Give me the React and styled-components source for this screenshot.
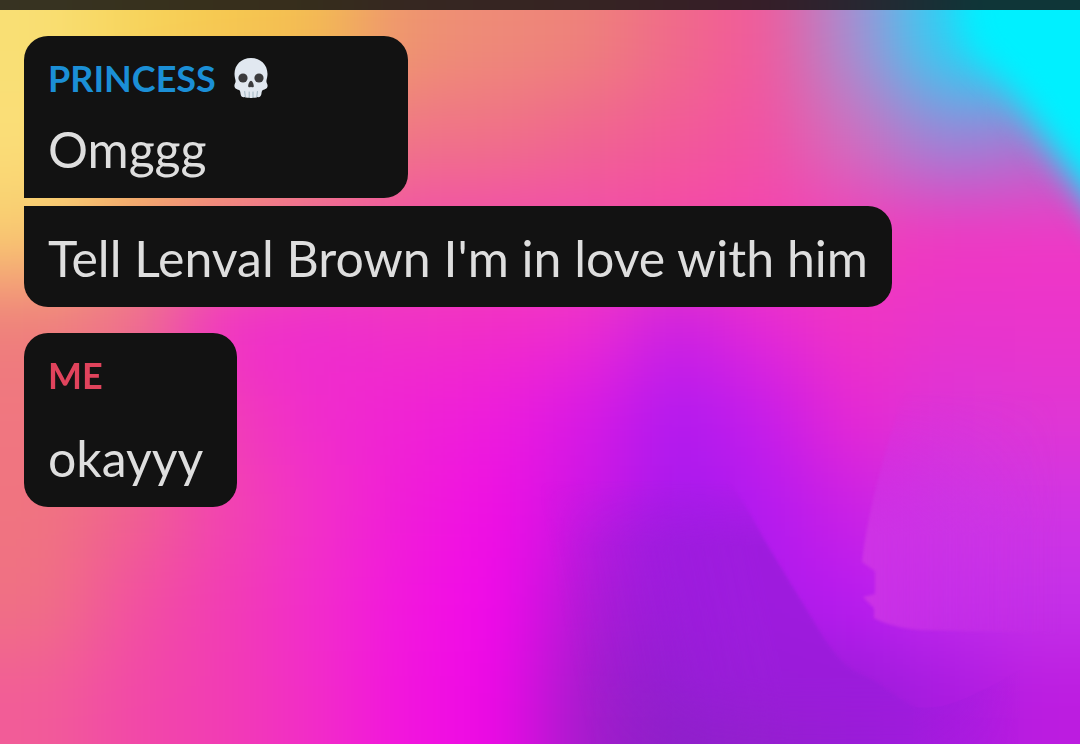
import React from "react";
import styled, { createGlobalStyle } from "styled-components";

const messageGroups = [
  {
    author: "Princess",
    skull: true,
    color: "#1b8fd6",
    messages: [
      { text: "Omggg", minWidth: 384, gap: 17 },
      { text: "Tell Lenval Brown I'm in love with him" },
    ],
  },
  {
    author: "Me",
    color: "#e0435c",
    messages: [{ text: "okayyy", minWidth: 213, gap: 29 }],
  },
];

// wallpaper colours, one entry per 90x93 patch, left to right
const patches = [
  ["#f9df74", "#f7d45c", "#f6c850", "#f3bc52", "#ee9470", "#ee8a78", "#ee827a", "#f06a8a", "#f2589c", "#a490d4", "#28d4f6", "#00f0ff"],
  ["#fade78", "#f5c860", "#f0a868", "#ee9070", "#f07488", "#f07088", "#f06490", "#f25a98", "#f250a4", "#d070c0", "#9888d8", "#a878d0"],
  ["#f9cc70", "#f09a70", "#f07888", "#f060a0", "#f250a8", "#f24cac", "#f24cac", "#f448a8", "#f444b0", "#f040b8", "#f038c0", "#f038c4"],
  ["#ee7e7c", "#ee6c90", "#f030c8", "#ee2cce", "#f030c8", "#f22cc8", "#ee2cd0", "#cc20e4", "#e628d6", "#f034c4", "#e834cc", "#ea34cc"],
  ["#f07680", "#f07088", "#f23cb8", "#f02ccc", "#f022d4", "#ee1cdc", "#d818e4", "#b01af0", "#c61cea", "#e828d2", "#dc34d8", "#e036d4"],
  ["#f07480", "#f06090", "#f244b0", "#f230c8", "#f01cd8", "#f00ee4", "#cc16e4", "#a61aec", "#b41af0", "#cc20e4", "#cc34e4", "#d034e4"],
  ["#f07084", "#f250a0", "#f23cb4", "#f22ccc", "#f216de", "#f208ea", "#b41ad6", "#9c1cdc", "#ae1aec", "#b81af0", "#c028ec", "#c430e8"],
  ["#f25c98", "#f248a8", "#f23cb4", "#f22cc8", "#f214de", "#ee08e6", "#a41ccc", "#8c20c8", "#9420cc", "#9a1cd8", "#a81ae0", "#bc1ce0"],
];

const clamp = (value, max) => Math.min(Math.max(value, 0), max);

const Wallpaper = () => {
  const cells = [];
  // two extra rings of patches keep the blur solid at the edges
  for (let row = -2; row <= patches.length + 1; row++) {
    for (let col = -2; col <= 13; col++) {
      cells.push(
        <rect
          key={`${row}-${col}`}
          x={col * 90}
          y={row * 93}
          width="91"
          height="94"
          fill={patches[clamp(row, 7)][clamp(col, 11)]}
        />
      );
    }
  }

  return (
    <WallpaperSvg viewBox="0 0 1080 744" preserveAspectRatio="none" aria-hidden="true">
      <defs>
        <filter
          id="patchBlur"
          filterUnits="userSpaceOnUse"
          x="-180"
          y="-186"
          width="1440"
          height="1116"
          colorInterpolationFilters="sRGB"
        >
          <feGaussianBlur stdDeviation="38" />
        </filter>
        <filter id="cyanBlur" x="-50%" y="-50%" width="200%" height="200%" colorInterpolationFilters="sRGB">
          <feGaussianBlur stdDeviation="16" />
        </filter>
        <filter id="edgeBlur" x="-20%" y="-20%" width="140%" height="140%" colorInterpolationFilters="sRGB">
          <feGaussianBlur stdDeviation="1.5" />
        </filter>
        <linearGradient id="duneFill" gradientUnits="userSpaceOnUse" x1="560" y1="600" x2="760" y2="560">
          <stop offset="0" stopColor="#941ed2" stopOpacity="0" />
          <stop offset="0.6" stopColor="#9a1cda" stopOpacity="0.8" />
          <stop offset="1" stopColor="#9a1cda" />
        </linearGradient>
        <linearGradient id="duneFade" gradientUnits="userSpaceOnUse" x1="0" y1="480" x2="0" y2="744">
          <stop offset="0" stopColor="#fff" stopOpacity="0" />
          <stop offset="0.25" stopColor="#fff" stopOpacity="0.8" />
          <stop offset="0.75" stopColor="#fff" stopOpacity="0.8" />
          <stop offset="1" stopColor="#fff" stopOpacity="0.3" />
        </linearGradient>
        <mask id="duneMask">
          <rect y="460" width="1080" height="284" fill="url(#duneFade)" />
        </mask>
        <linearGradient id="cliffFill" gradientUnits="userSpaceOnUse" x1="865" y1="0" x2="1060" y2="0">
          <stop offset="0" stopColor="#d038e4" />
          <stop offset="1" stopColor="#cc34e6" stopOpacity="0" />
        </linearGradient>
        <linearGradient id="cliffFade" gradientUnits="userSpaceOnUse" x1="0" y1="390" x2="0" y2="632">
          <stop offset="0" stopColor="#fff" stopOpacity="0" />
          <stop offset="0.6" stopColor="#fff" stopOpacity="0.8" />
          <stop offset="1" stopColor="#fff" stopOpacity="0.8" />
        </linearGradient>
        <mask id="cliffMask">
          <rect y="390" width="1080" height="260" fill="url(#cliffFade)" />
        </mask>
        <linearGradient id="shoreFill" gradientUnits="userSpaceOnUse" x1="900" y1="0" x2="1020" y2="0">
          <stop offset="0" stopColor="#9a1cda" />
          <stop offset="1" stopColor="#a41ade" stopOpacity="0" />
        </linearGradient>
      </defs>
      <g filter="url(#patchBlur)">{cells}</g>
      <path
        d="M976 -40C962 0 960 40 985 60C1008 76 1020 104 1044 138L1084 196L1140 280V-40Z"
        fill="#00f0ff"
        filter="url(#cyanBlur)"
      />
      <g mask="url(#duneMask)">
        <path
          d="M540 470H715C740 490 752 518 768 546L825 640C838 658 845 667 860 674C880 682 898 700 915 707V780H540Z"
          fill="url(#duneFill)"
          filter="url(#edgeBlur)"
        />
        <path d="M915 707C940 710 960 704 1020 670V780H915Z" fill="url(#shoreFill)" />
      </g>
      <g mask="url(#cliffMask)">
        <path
          d="M905 390C885 450 868 510 862 562L875 571V594L863 597L874 608V618C885 624 900 628 920 630L1080 634V390Z"
          fill="url(#cliffFill)"
          filter="url(#edgeBlur)"
        />
      </g>
    </WallpaperSvg>
  );
};

const Skull = () => (
  <SkullSvg viewBox="0 0 34 40" role="img" aria-label="skull">
    <path
      d="M17 0C7.300 0 .5 6.800 .5 16C.5 19 1.400 21 1.600 23C1.700 25 .3 26 .4 28C.5 30.500 3 31.300 5 32C6.200 32.500 6.300 34 6.600 36C7 38.600 8.600 39.600 10.600 39C12 40 14 40 15.200 39.400C16.300 40.200 18 40.200 19 39.400C20.500 40 22.200 40 23.500 39C25.500 39.500 27 38.500 27.400 36C27.700 34 27.800 32.500 29 32C31 31.300 33.500 30.500 33.600 28C33.700 26 32.300 25 32.400 23C32.600 21 33.500 19 33.500 16C33.500 6.800 26.700 0 17 0Z"
      fill="#e1e8f0"
    />
    <circle cx="9" cy="20" r="4.600" fill="#3b3b3d" />
    <circle cx="25" cy="20" r="4.600" fill="#3b3b3d" />
    <path
      d="M17 22.800C15.600 22.800 14.200 26.300 14.200 28.200C14.200 29.600 16.200 29.500 17 28.700C17.800 29.500 19.800 29.600 19.800 28.200C19.800 26.300 18.400 22.800 17 22.800Z"
      fill="#3b3b3d"
    />
    <path
      d="M10.700 33.500L11.300 38.800M15.200 34V39.200M19 34V39.200M23.400 33.500L22.800 38.800"
      stroke="#9fb4c0"
      strokeWidth="1"
      strokeLinecap="round"
      fill="none"
    />
  </SkullSvg>
);

const App = () => {
  return (
    <>
      <GlobalStyle />
      <Wallpaper />
      <TopBar />
      <Chat>
        {messageGroups.map((group) => (
          <Group key={group.author}>
            {group.messages.map((message, index) => (
              <Bubble
                key={message.text}
                $first={index === 0}
                $last={index === group.messages.length - 1}
                $minWidth={message.minWidth}
                $gap={message.gap}
              >
                {index === 0 && (
                  <Author $color={group.color}>
                    {group.author}
                    {group.skull && <Skull />}
                  </Author>
                )}
                <Text>{message.text}</Text>
              </Bubble>
            ))}
          </Group>
        ))}
      </Chat>
    </>
  );
};

export default App;

const GlobalStyle = createGlobalStyle`
  * {
    box-sizing: border-box;
  }
  body {
    margin: 0;
    font-family: Lato, "Liberation Sans", sans-serif;
    background-color: #f02ccc;
  }
`;

const WallpaperSvg = styled.svg`
  position: fixed;
  inset: 0;
  width: 100%;
  height: 100%;
  z-index: -1;
`;

const TopBar = styled.header`
  height: 10px;
  background-color: rgba(18, 18, 18, 0.84);
`;

const Chat = styled.main`
  display: flex;
  flex-direction: column;
  gap: 26px;
  padding: 26px 24px;
`;

const Group = styled.section`
  display: flex;
  flex-direction: column;
  align-items: flex-start;
  gap: 8px;
`;

const Bubble = styled.article`
  display: flex;
  flex-direction: column;
  gap: ${(props) => props.$gap || 0}px;
  min-width: ${(props) => props.$minWidth || 0}px;
  padding: 20px 24px 17px;
  background-color: #121212;
  border-radius: 24px;
  border-top-left-radius: ${(props) => (props.$first ? "24px" : 0)};
  border-bottom-left-radius: ${(props) => (props.$last ? "24px" : 0)};
`;

const Author = styled.h2`
  display: flex;
  align-items: center;
  gap: 18px;
  margin: 0;
  font-size: 36px;
  font-weight: 700;
  line-height: 44px;
  text-transform: uppercase;
  color: ${(props) => props.$color};
`;

const Text = styled.p`
  margin: 0;
  font-size: 50px;
  line-height: 64px;
  color: #dedede;
`;

const SkullSvg = styled.svg`
  width: 34px;
  height: 40px;
`;
